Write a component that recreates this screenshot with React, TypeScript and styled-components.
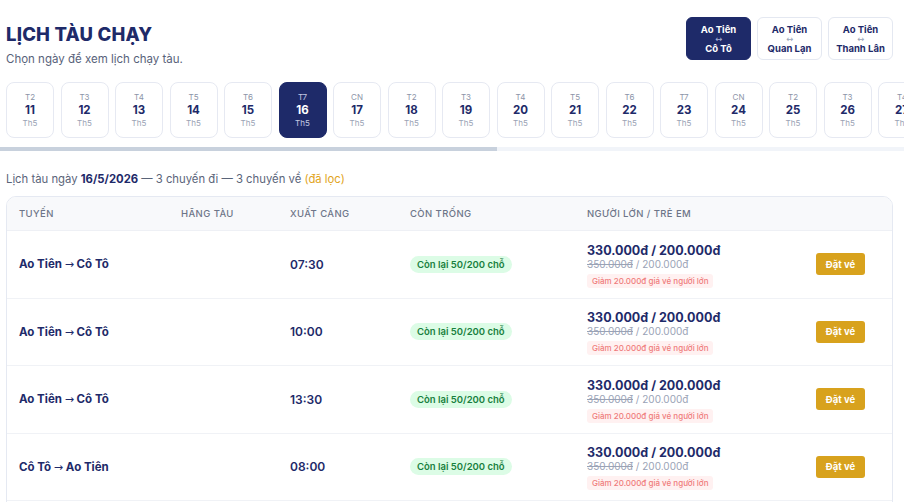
import * as React from 'react';
import styled, { createGlobalStyle } from 'styled-components';

const NAVY = '#1e2a69';

const GlobalStyle = createGlobalStyle`
  html, body {
    margin: 0;
    padding: 0;
    background: #ffffff;
    overflow: hidden;
  }
  body {
    font-family: Inter, "Noto Sans", "Liberation Sans", sans-serif;
    color: ${NAVY};
  }
  * {
    box-sizing: border-box;
  }
`;

const Page = styled.div`
  padding: 17px 11px 0 6px;
`;

const Header = styled.div`
  display: flex;
  justify-content: space-between;
  align-items: flex-start;
`;

const TitleBlock = styled.div`
  padding-top: 5px;
`;

const Title = styled.h1`
  margin: 0;
  font-size: 18.5px;
  line-height: 24px;
  font-weight: 800;
  color: ${NAVY};
  letter-spacing: 0.2px;
`;

const Subtitle = styled.p`
  margin: 6px 0 0;
  font-size: 11.5px;
  line-height: 14px;
  color: #58627a;
`;

const RouteGroup = styled.div`
  display: flex;
  gap: 6px;
`;

const RouteButton = styled.button<{ active?: boolean }>`
  width: 65px;
  height: 43px;
  border-radius: 6px;
  border: 1px solid ${(p) => (p.active ? NAVY : '#e4e8f1')};
  background: ${(p) => (p.active ? NAVY : '#ffffff')};
  color: ${(p) => (p.active ? '#ffffff' : NAVY)};
  font-family: inherit;
  font-size: 9.5px;
  font-weight: 700;
  line-height: 11px;
  padding: 0;
  display: flex;
  flex-direction: column;
  align-items: center;
  justify-content: center;
  cursor: pointer;
`;

const RouteArrow = styled.span<{ active?: boolean }>`
  font-family: "DejaVu Sans", sans-serif;
  font-size: 8.5px;
  line-height: 8px;
  font-weight: 400;
  color: ${(p) => (p.active ? '#a9b2d4' : '#9aa3b8')};
`;

const DateStrip = styled.div`
  margin: 16px -11px 0 -6px;
  padding: 0 10px 9px 6px;
  display: flex;
  gap: 6.5px;
  overflow-x: auto;
  scrollbar-width: none;
`;

const ScrollTrack = styled.div`
  margin: 0 -11px 0 -6px;
  height: 4px;
  background: #f1f4f9;
`;

const ScrollThumb = styled.div`
  height: 100%;
  background: #c8d1dd;
`;

const DateCell = styled.div<{ active?: boolean }>`
  flex: 0 0 48px;
  height: 56px;
  border-radius: 8px;
  border: 1px solid ${(p) => (p.active ? NAVY : '#e6e9f2')};
  background: ${(p) => (p.active ? NAVY : '#ffffff')};
  display: flex;
  flex-direction: column;
  align-items: center;
  justify-content: center;
  cursor: pointer;
`;

const DayName = styled.span<{ active?: boolean }>`
  font-size: 8px;
  line-height: 11px;
  color: ${(p) => (p.active ? '#c5cbe3' : '#8c94a8')};
`;

const DayNumber = styled.span<{ active?: boolean }>`
  font-size: 11.5px;
  line-height: 15px;
  font-weight: 700;
  color: ${(p) => (p.active ? '#ffffff' : NAVY)};
`;

const MonthName = styled.span<{ active?: boolean }>`
  font-size: 8px;
  line-height: 11px;
  color: ${(p) => (p.active ? '#c5cbe3' : '#9aa2b4')};
`;

const Summary = styled.div`
  margin-top: 21px;
  font-size: 11.3px;
  line-height: 14px;
  color: #5a6479;

  b {
    color: ${NAVY};
    font-weight: 700;
  }
`;

const Filtered = styled.span`
  color: #e2a41c;
`;

const Card = styled.div`
  margin-top: 10px;
  border: 1px solid #e5e9f2;
  border-radius: 10px;
  overflow: hidden;
`;

const Grid = styled.div<{ head?: boolean }>`
  display: grid;
  grid-template-columns: 162px 109px 120px 177px 1fr 49px;
  align-items: center;
  padding: 0 27px 0 12px;
  height: ${(p) => (p.head ? '34px' : '67.5px')};
  background: ${(p) => (p.head ? '#f8f9fb' : '#ffffff')};
  border-bottom: 1px solid ${(p) => (p.head ? '#eef0f5' : '#f0f2f6')};
`;

const HeadCell = styled.div`
  font-size: 9.5px;
  font-weight: 500;
  letter-spacing: 0.4px;
  color: #6d7588;
  text-transform: uppercase;
`;

const RouteText = styled.div`
  font-size: 11.5px;
  font-weight: 700;
  color: ${NAVY};
`;

const Arrow = styled.span`
  font-family: "DejaVu Sans", sans-serif;
  font-weight: 400;
  font-size: 11px;
`;

const TimeText = styled.div`
  font-size: 12px;
  font-weight: 600;
  color: ${NAVY};
`;

const Seats = styled.span`
  justify-self: start;
  display: inline-block;
  padding: 3px 7px;
  border-radius: 9px;
  background: #dcfce6;
  color: #18803e;
  font-size: 9.5px;
  font-weight: 600;
  line-height: 11px;
`;

const PriceBlock = styled.div`
  display: flex;
  flex-direction: column;
  align-items: flex-start;
  padding-top: 2px;
`;

const Price = styled.div`
  font-size: 12.5px;
  line-height: 15px;
  font-weight: 700;
  color: ${NAVY};
`;

const OldPrice = styled.div`
  font-size: 10px;
  line-height: 13px;
  color: #9aa3b6;

  s {
    text-decoration-thickness: 1px;
  }
`;

const Discount = styled.span`
  margin-top: 3px;
  padding: 2px 5px;
  border-radius: 3px;
  background: #fff1f1;
  color: #ef7c7c;
  font-size: 8px;
  line-height: 10px;
  font-weight: 500;
`;

const BookButton = styled.button`
  width: 49px;
  height: 22px;
  border: none;
  border-radius: 3px;
  background: #d8a21d;
  color: #ffffff;
  font-family: inherit;
  font-size: 9.5px;
  font-weight: 700;
  padding: 0;
  cursor: pointer;
`;

const dayLabels = ['CN', 'T2', 'T3', 'T4', 'T5', 'T6', 'T7'];

const dates = Array.from({ length: 30 }, (_, i) => {
  const d = new Date(2026, 4, 11 + i);
  return {
    key: i,
    dow: dayLabels[d.getDay()],
    day: d.getDate(),
    month: 'Th' + (d.getMonth() + 1),
    active: d.getMonth() === 4 && d.getDate() === 16,
  };
});

const routes = [
  { from: 'Ao Tiên', to: 'Cô Tô', active: true },
  { from: 'Ao Tiên', to: 'Quan Lạn' },
  { from: 'Ao Tiên', to: 'Thanh Lân' },
];

const trips = [
  { from: 'Ao Tiên', to: 'Cô Tô', time: '07:30' },
  { from: 'Ao Tiên', to: 'Cô Tô', time: '10:00' },
  { from: 'Ao Tiên', to: 'Cô Tô', time: '13:30' },
  { from: 'Cô Tô', to: 'Ao Tiên', time: '08:00' },
  { from: 'Cô Tô', to: 'Ao Tiên', time: '13:00' },
  { from: 'Cô Tô', to: 'Ao Tiên', time: '15:30' },
];

// visible part of the date strip vs its full width (904 / 1644)
const thumbPercent = (904 / 1644) * 100;

export default function App() {
  return (
    <Page>
      <GlobalStyle />
      <Header>
        <TitleBlock>
          <Title>LỊCH TÀU CHẠY</Title>
          <Subtitle>Chọn ngày để xem lịch chạy tàu.</Subtitle>
        </TitleBlock>
        <RouteGroup>
          {routes.map((r) => (
            <RouteButton key={r.to} active={r.active}>
              <span>{r.from}</span>
              <RouteArrow active={r.active}>↔</RouteArrow>
              <span>{r.to}</span>
            </RouteButton>
          ))}
        </RouteGroup>
      </Header>

      <DateStrip>
        {dates.map((d) => (
          <DateCell key={d.key} active={d.active}>
            <DayName active={d.active}>{d.dow}</DayName>
            <DayNumber active={d.active}>{d.day}</DayNumber>
            <MonthName active={d.active}>{d.month}</MonthName>
          </DateCell>
        ))}
      </DateStrip>
      <ScrollTrack>
        <ScrollThumb style={{ width: `${thumbPercent}%` }} />
      </ScrollTrack>

      <Summary>
        Lịch tàu ngày <b>16/5/2026</b> — 3 chuyến đi — 3 chuyến về <Filtered>(đã lọc)</Filtered>
      </Summary>

      <Card>
        <Grid head>
          <HeadCell>Tuyến</HeadCell>
          <HeadCell>Hãng tàu</HeadCell>
          <HeadCell>Xuất cảng</HeadCell>
          <HeadCell>Còn trống</HeadCell>
          <HeadCell>Người lớn / trẻ em</HeadCell>
          <HeadCell />
        </Grid>
        {trips.map((t, i) => (
          <Grid key={i}>
            <RouteText>
              {t.from} <Arrow>→</Arrow> {t.to}
            </RouteText>
            <div />
            <TimeText>{t.time}</TimeText>
            <Seats>Còn lại 50/200 chỗ</Seats>
            <PriceBlock>
              <Price>330.000đ / 200.000đ</Price>
              <OldPrice>
                <s>350.000đ</s> / 200.000đ
              </OldPrice>
              <Discount>Giảm 20.000đ giá vé người lớn</Discount>
            </PriceBlock>
            <BookButton>Đặt vé</BookButton>
          </Grid>
        ))}
      </Card>
    </Page>
  );
}
